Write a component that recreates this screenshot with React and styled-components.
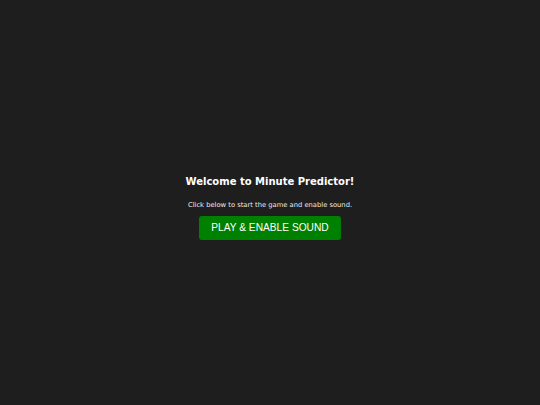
import React from 'react';
import styled, { createGlobalStyle } from 'styled-components';

const GlobalStyle = createGlobalStyle`
  html, body {
    margin: 0;
    padding: 0;
    background: #1e1e1e;
  }
`;

const Screen = styled.div`
  box-sizing: border-box;
  width: 100vw;
  height: 100vh;
  padding-top: 7px;
  display: flex;
  flex-direction: column;
  align-items: center;
  justify-content: center;
  background: #1e1e1e;
  color: #ffffff;
  font-family: "DejaVu Sans", Verdana, sans-serif;
`;

const Title = styled.h2`
  margin: 0 0 12px;
  padding-top: 2px;
  font-size: 10px;
  line-height: 14px;
  font-weight: bold;
  color: #ffffff;
`;

const Hint = styled.p`
  margin: 0 0 6px;
  font-size: 6.75px;
  line-height: 9px;
  color: #ececec;
`;

const PlayButton = styled.button`
  box-sizing: border-box;
  width: 142px;
  height: 24px;
  padding: 0;
  border: none;
  border-radius: 3px;
  background: #008000;
  color: #ffffff;
  font-family: "Liberation Sans", Arial, sans-serif;
  font-size: 10.2px;
  cursor: pointer;
`;

export default function App() {
  return (
    <>
      <GlobalStyle />
      <Screen>
        <Title>Welcome to Minute Predictor!</Title>
        <Hint>Click below to start the game and enable sound.</Hint>
        <PlayButton>PLAY &amp; ENABLE SOUND</PlayButton>
      </Screen>
    </>
  );
}
